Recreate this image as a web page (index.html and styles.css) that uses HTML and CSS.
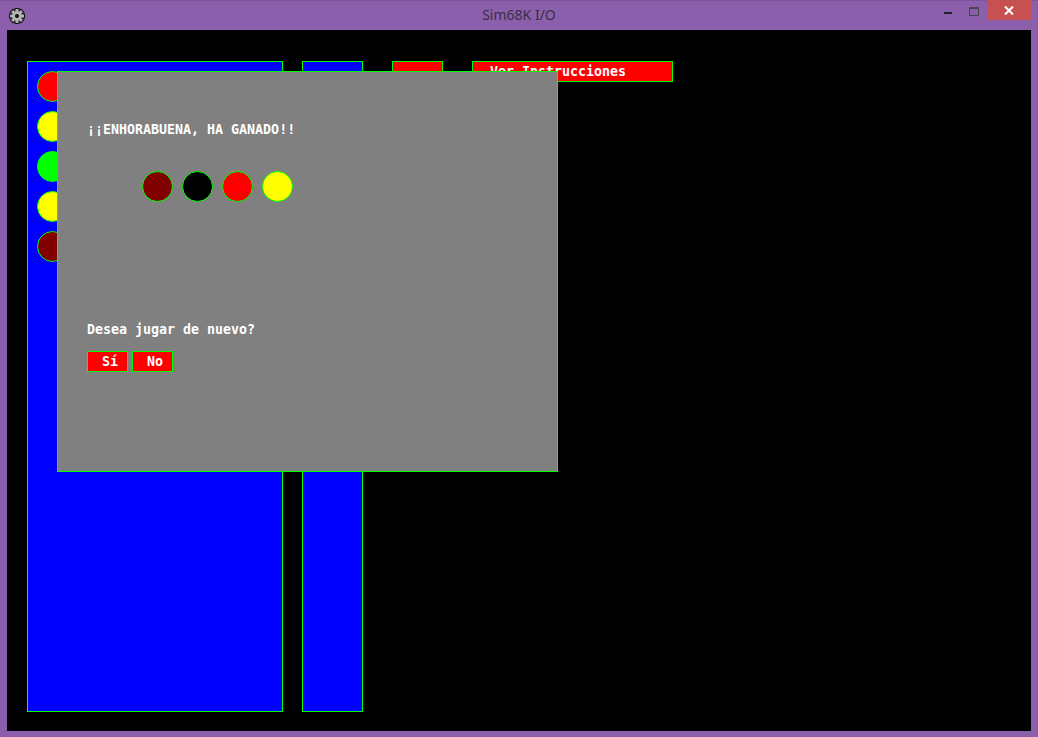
FILE: index.html
```html
<!DOCTYPE html>
<html>
<head>
<meta charset="utf-8">
<link rel="stylesheet" href="styles.css">
</head>
<body>
<div class="window">
  <div class="titlebar">
    <div class="tb-left">
      <svg class="gear" width="16" height="16" viewBox="-8 -8 16 16">
        <g stroke="#111" stroke-width="2" fill="#b4b4b4">
          <rect x="-1.5" y="-7" width="3" height="14"/>
          <rect x="-1.5" y="-7" width="3" height="14" transform="rotate(45)"/>
          <rect x="-1.5" y="-7" width="3" height="14" transform="rotate(90)"/>
          <rect x="-1.5" y="-7" width="3" height="14" transform="rotate(135)"/>
          <circle r="5"/>
        </g>
        <g fill="#b4b4b4">
          <rect x="-1.5" y="-7" width="3" height="14"/>
          <rect x="-1.5" y="-7" width="3" height="14" transform="rotate(45)"/>
          <rect x="-1.5" y="-7" width="3" height="14" transform="rotate(90)"/>
          <rect x="-1.5" y="-7" width="3" height="14" transform="rotate(135)"/>
          <circle r="5"/>
        </g>
        <circle r="2" fill="#111"/>
      </svg>
    </div>
    <div class="tb-title">Sim68K I/O</div>
    <div class="tb-right">
      <div class="tb-btn tb-min"><span class="dash"></span></div>
      <div class="tb-btn tb-max"><span class="box"></span></div>
      <div class="tb-close">
        <svg width="10" height="9" viewBox="0 0 10 9"><path d="M1 0.5 L9 8.5 M9 0.5 L1 8.5" stroke="#fff" stroke-width="2"/></svg>
      </div>
    </div>
  </div>
  <div class="client">
    <div class="row">
      <div class="panel panel-main">
        <div class="peg red"></div>
        <div class="peg yellow"></div>
        <div class="peg green"></div>
        <div class="peg yellow"></div>
        <div class="peg maroon"></div>
      </div>
      <div class="panel panel-side"></div>
      <div class="btn btn-small"></div>
      <div class="btn btn-wide">Ver Instrucciones</div>
    </div>
    <div class="dialog">
      <div class="msg">¡¡ENHORABUENA, HA GANADO!!</div>
      <div class="code">
        <div class="peg maroon"></div>
        <div class="peg black"></div>
        <div class="peg red"></div>
        <div class="peg yellow"></div>
      </div>
      <div class="msg ask">Desea jugar de nuevo?</div>
      <div class="choices">
        <div class="btn btn-choice">Sí</div>
        <div class="btn btn-choice">No</div>
      </div>
    </div>
  </div>
</div>
</body>
</html>
```
FILE: styles.css
```css
html, body {
  margin: 0;
  padding: 0;
}
body {
  width: 1038px;
  height: 737px;
  overflow: hidden;
  background: #8b5fab;
}
.window {
  width: 1038px;
  height: 737px;
  background: #8b5fab;
  display: flex;
  flex-direction: column;
}
.titlebar {
  height: 30px;
  display: grid;
  grid-template-columns: 1fr auto 1fr;
  align-items: start;
  box-sizing: border-box;
  border-top: 1px solid #7d549b;
}
.tb-left {
  padding: 7px 0 0 9px;
}
.gear {
  display: block;
}
.tb-title {
  font-family: "Noto Sans", "Open Sans", sans-serif;
  font-size: 14px;
  line-height: 18px;
  padding-top: 5px;
  color: #3a2f45;
}
.tb-right {
  display: flex;
  justify-content: flex-end;
  padding-right: 7px;
}
.tb-btn {
  height: 20px;
  display: flex;
  justify-content: center;
}
.tb-min {
  width: 27px;
}
.tb-max {
  width: 26px;
}
.dash {
  display: block;
  width: 8px;
  height: 2px;
  margin-top: 11px;
  background: #1e1e24;
}
.box {
  display: block;
  width: 8px;
  height: 6px;
  margin-top: 6px;
  border: 1px solid #4a4452;
  border-top-width: 2px;
}
.tb-close {
  width: 44px;
  height: 20px;
  margin-top: -1px;
  background: #c75050;
  display: flex;
  align-items: center;
  justify-content: center;
}
.tb-close svg {
  display: block;
}
.client {
  position: relative;
  width: 1024px;
  height: 701px;
  margin-left: 7px;
  background: #000;
  box-sizing: border-box;
  padding: 31px 0 0 20px;
  font-family: "DejaVu Sans Mono", "Liberation Mono", monospace;
  font-weight: bold;
  font-size: 13.3px;
  line-height: 16px;
  color: #fff;
}
.row {
  display: flex;
  align-items: flex-start;
}
.panel {
  box-sizing: border-box;
  height: 651px;
  background: #0000ff;
  border: 1px solid #00ff00;
}
.panel-main {
  width: 256px;
  padding: 9px 0 0 9px;
  display: flex;
  flex-direction: column;
  gap: 9px;
}
.panel-side {
  width: 61px;
  margin-left: 19px;
}
.peg {
  width: 31px;
  height: 31px;
  box-sizing: border-box;
  border-radius: 50%;
  border: 1px solid #00ff00;
  flex: none;
}
.red { background: #ff0000; }
.yellow { background: #ffff00; }
.green { background: #00ff00; }
.maroon { background: #800000; }
.black { background: #000000; }
.btn {
  box-sizing: border-box;
  height: 21px;
  background: #ff0000;
  border: 1px solid #00ff00;
  padding-top: 2px;
  white-space: nowrap;
}
.btn-small {
  width: 51px;
  margin-left: 29px;
}
.btn-wide {
  width: 201px;
  margin-left: 29px;
  padding-left: 17px;
}
.dialog {
  position: absolute;
  left: 50px;
  top: 41px;
  width: 501px;
  height: 401px;
  box-sizing: border-box;
  background: #808080;
  border: 1px solid #00ff00;
  padding: 50px 0 0 29px;
  display: flex;
  flex-direction: column;
  align-items: flex-start;
}
.code {
  display: flex;
  gap: 9px;
  margin: 33px 0 0 55px;
}
.ask {
  margin-top: 120px;
}
.choices {
  display: flex;
  gap: 4px;
  margin-top: 13px;
}
.btn-choice {
  width: 41px;
  padding-left: 14px;
}
```
